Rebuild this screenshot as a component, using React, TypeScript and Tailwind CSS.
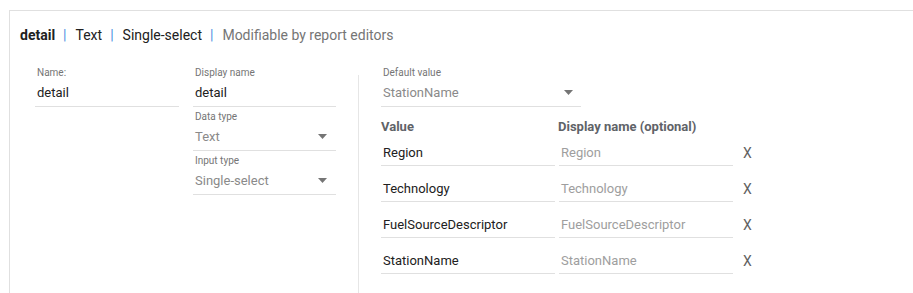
import { ReactNode } from "react"

const font = { fontFamily: "Roboto, 'Liberation Sans', sans-serif" }

function Arrow() {
  return (
    <svg width="9" height="5" viewBox="0 0 9 5" className="shrink-0">
      <path d="M0 0 L9 0 L4.5 5 Z" fill="#757575" />
    </svg>
  )
}

function Field({
  label,
  width,
  children,
}: {
  label: string
  width: string
  children: ReactNode
}) {
  return (
    <div className={`${width} pt-[4px] border-b border-[#e0e0e0]`}>
      <div className="h-[12px] text-[10px] leading-[12px] text-[#757575] pl-[2px]">{label}</div>
      <div className="h-[27px] flex items-center justify-between text-[13px] pl-[2px]">{children}</div>
    </div>
  )
}

const rows = ["Region", "Technology", "FuelSourceDescriptor", "StationName"]

export default function App() {
  return (
    <div style={font} className="w-[913px] h-[293px] bg-white overflow-hidden pt-[10px] pl-[9px]">
      <div className="h-full border-l border-t border-[#e0e0e0] flex flex-col">
        {/* Header */}
        <div className="pt-[14px] pl-[10px] text-[14px] leading-[20px] text-[#212121]">
          <span className="font-bold">detail</span>
          <span className="ml-[8px] mr-[9px] text-[#4a90e2]">|</span>
          <span>Text</span>
          <span className="ml-[8px] mr-[9px] text-[#4a90e2]">|</span>
          <span>Single-select</span>
          <span className="ml-[8px] mr-[9px] text-[#4a90e2]">|</span>
          <span className="text-[#757575]">Modifiable by report editors</span>
        </div>

        {/* Body */}
        <div className="flex flex-1 mt-[18px] pl-[25px]">
          <div className="w-[144px]">
            <Field label="Name:" width="w-[144px]">
              <span className="text-[#212121]">detail</span>
            </Field>
          </div>

          <div className="ml-[14px] w-[143px] flex flex-col">
            <Field label="Display name" width="w-[143px]">
              <span className="text-[#212121]">detail</span>
            </Field>
            <Field label="Data type" width="w-[143px]">
              <span className="text-[#8a8a8a]">Text</span>
              <span className="mr-[9px]"><Arrow /></span>
            </Field>
            <Field label="Input type" width="w-[143px]">
              <span className="text-[#8a8a8a]">Single-select</span>
              <span className="mr-[9px]"><Arrow /></span>
            </Field>
          </div>

          <div className="ml-[22px] mt-[12px] w-px bg-[#e6e6e6]" />

          <div className="ml-[22px] flex flex-col">
            <Field label="Default value" width="w-[200px]">
              <span className="text-[#8a8a8a]">StationName</span>
              <span className="mr-[8px]"><Arrow /></span>
            </Field>

            <div className="flex pt-[12px] text-[13px] leading-[16px] font-bold text-[#5f6368]">
              <div className="w-[174px]">Value</div>
              <div className="ml-[3px]">Display name (optional)</div>
            </div>

            {rows.map((r, i) => (
              <div key={r} className="flex items-end text-[13px] leading-[20px]">
                <div
                  className={`w-[174px] pl-[2px] pb-[2px] border-b border-[#e0e0e0] text-[#212121] ${
                    i === 0 ? "pt-[8px]" : "pt-[13px]"
                  }`}
                >
                  {r}
                </div>
                <div
                  className={`ml-[4px] w-[174px] pl-[2px] pb-[2px] border-b border-[#e0e0e0] text-[#9e9e9e] ${
                    i === 0 ? "pt-[8px]" : "pt-[13px]"
                  }`}
                >
                  {r}
                </div>
                <div className="ml-[10px] pb-[3px] text-[14px] text-[#616161]">X</div>
              </div>
            ))}
          </div>
        </div>
      </div>
    </div>
  )
}
